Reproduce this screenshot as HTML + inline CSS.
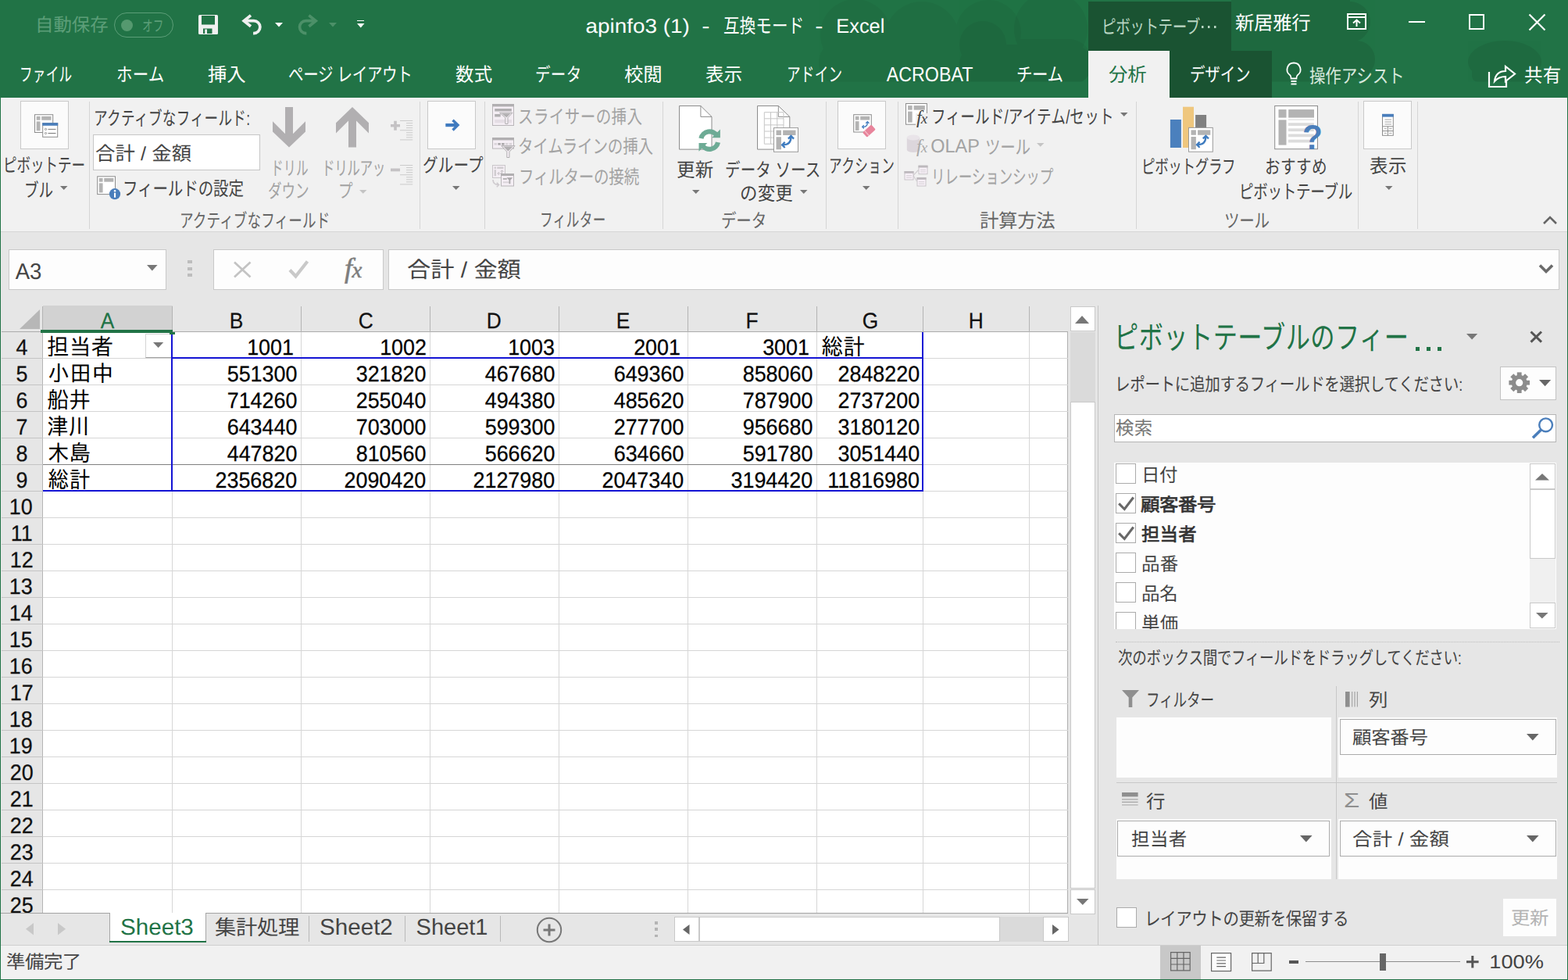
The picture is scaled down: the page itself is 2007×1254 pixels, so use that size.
<!DOCTYPE html>
<html lang="ja">
<head>
<meta charset="utf-8">
<title>apinfo3 (1) - Excel</title>
<style>
html,body{margin:0;padding:0}
body{width:2007px;height:1254px;overflow:hidden;background:#e6e6e6;font-family:"Liberation Sans",sans-serif;color:#000;text-rendering:geometricPrecision}
#app{position:relative;width:2007px;height:1254px;overflow:hidden;background:#e6e6e6}
#app div,#app header,#app nav,#app section,#app aside,#app footer,#app main{position:absolute;box-sizing:border-box}
.x{position:absolute;white-space:pre}
.j,.i{position:absolute;overflow:visible;display:block}
.j text{font-family:"Liberation Sans","Noto Sans CJK JP",sans-serif;font-size:1000px}
.j text.g{font-family:"Liberation Sans","IPAGothic","Noto Sans CJK JP",sans-serif}
.titlebar,.tabs{background:#217346}
.tabs{background:none}
.ribbon{background:#f1f1f1}
.statusbar{background:#f1f1f1}
.cell{position:absolute;white-space:pre}
.fx{font-family:"Liberation Serif",serif;font-style:italic;line-height:1}
</style>
</head>
<body>
<div id="app">
<header class="titlebar" style="left:0px;top:0px;width:2007px;height:125px;">
<svg class="i" style="left:0;top:0" width="2007" height="125" viewBox="0 0 2007 125" aria-hidden="true"><defs><clipPath id="cc"><rect width="2007" height="104.600"/></clipPath></defs><g clip-path="url(#cc)" fill="#000"><g opacity=".045"><circle cx="1095" cy="44" r="45"/><circle cx="1180" cy="50" r="48"/><circle cx="1265" cy="42" r="42"/><rect x="1048" y="50" width="350" height="60" rx="30"/></g><g opacity=".05"><circle cx="1345" cy="37" r="47"/><circle cx="1258" cy="57" r="30"/><rect x="1228" y="57" width="170" height="50" rx="25"/></g><g opacity=".085"><rect x="1576" y="0" width="152" height="105"/><circle cx="1728" cy="28" r="26"/><circle cx="1736" cy="76" r="24"/></g><g opacity=".075"><ellipse cx="1926" cy="79" rx="47" ry="27"/><rect x="1884" y="80" width="86" height="25" rx="8"/></g></g></svg>
<div style="left:1393px;top:2px;width:183px;height:63px;background:#1a5332;"></div>
<div style="left:1497px;top:65px;width:131px;height:60px;background:#1a5332;"></div>
<div style="left:1393px;top:65px;width:104px;height:60px;background:#f1f1f1;"></div>
<svg class="j" style="left:44.97px;top:19.38px" width="93.56" height="25.85" viewBox="133 -900 3854 1100" preserveAspectRatio="none" fill="#5c9e78"><text x="133" y="0" textLength="3854" lengthAdjust="spacingAndGlyphs">自動保存</text></svg>
<div style="left:146px;top:16px;width:76px;height:32px;border:1.200px solid #5c9e78;border-radius:16px;box-sizing:border-box;"></div>
<div style="left:154.5px;top:24.5px;width:15px;height:15px;background:#55996f;border-radius:50%;"></div>
<svg class="j" style="left:182.25px;top:22.26px" width="27.31" height="21.45" viewBox="39 -900 1480 1100" preserveAspectRatio="none" fill="#5c9e78"><text x="39" y="0" textLength="1480" lengthAdjust="spacingAndGlyphs">オフ</text></svg>
<svg class="i" style="left:254px;top:19px;" width="25" height="25" viewBox="0 0 25 25"><rect width="25" height="25" rx="1.5" fill="#f0f0f0"/><rect x="4" y="1" width="17" height="11.5" fill="#217346"/><rect x="6" y="17.5" width="11.5" height="6.5" fill="#217346"/><rect x="8.200" y="18.500" width="2.800" height="5.500" fill="#f0f0f0"/></svg>
<svg class="i" style="left:309.6px;top:17.3px;" width="26.4" height="28.2" viewBox="0 0 30 32"><path d="M12.500 3L2.500 11L12.500 19" fill="none" stroke="#f0f0f0" stroke-width="4.200"/><path d="M4 11H17a9 9 0 0 1 0 18h-1" fill="none" stroke="#f0f0f0" stroke-width="4.200"/></svg>
<svg class="i" style="left:351.5px;top:28.75px;" width="10" height="5.5" viewBox="0 0 10 5.5"><path d="M0 0H10 L5 5.5 z" fill="#fff"/></svg>
<svg class="i" style="left:379.5px;top:17.3px;" width="26.4" height="28.2" viewBox="0 0 30 32"><g transform="translate(30 0) scale(-1 1)"><path d="M12.500 3L2.500 11L12.500 19" fill="none" stroke="#4c9068" stroke-width="4.200"/><path d="M4 11H17a9 9 0 0 1 0 18h-1" fill="none" stroke="#4c9068" stroke-width="4.200"/></g></svg>
<svg class="i" style="left:420.5px;top:28.75px;" width="10" height="5.5" viewBox="0 0 10 5.5"><path d="M0 0H10 L5 5.5 z" fill="#4c9068"/></svg>
<div style="left:456.5px;top:25.5px;width:9.5px;height:1.5px;background:#fff;"></div>
<svg class="i" style="left:456.55px;top:29.85px;" width="9.5" height="5.5" viewBox="0 0 9.5 5.5"><path d="M0 0H9.5 L4.75 5.5 z" fill="#fff"/></svg>
<span class="x" style="top:18px;height:33px;line-height:33px;font-size:25.6px;left:734.58px;width:162.39px;text-align:center;color:#fff;transform:scaleX(1.09);transform-origin:center center;">apinfo3 (1)</span>
<span class="x" style="top:18px;height:33px;line-height:33px;font-size:25.6px;left:878.99px;width:48.52px;text-align:center;color:#fff;transform:scaleX(1.2);transform-origin:center center;">-</span>
<svg class="j" style="left:926.28px;top:19px" width="103.44" height="27.5" viewBox="22 -900 4305 1100" preserveAspectRatio="none" fill="#fff"><text x="22" y="0" textLength="4305" lengthAdjust="spacingAndGlyphs">互換モード</text></svg>
<span class="x" style="top:18px;height:33px;line-height:33px;font-size:25.6px;left:1024.49px;width:48.52px;text-align:center;color:#fff;transform:scaleX(1.2);transform-origin:center center;">-</span>
<span class="x" style="top:18px;height:33px;line-height:33px;font-size:25.6px;left:1049.51px;width:102.6px;text-align:center;color:#fff;transform:scaleX(0.99);transform-origin:center center;">Excel</span>
<svg class="j" style="left:1409.91px;top:20.72px" width="125.88" height="26.4" viewBox="119 -900 5484 1100" preserveAspectRatio="none" fill="#b9d6c3"><text x="119" y="0" textLength="5484" lengthAdjust="spacingAndGlyphs">ピボットテーブ</text></svg>
<svg class="i" style="left:1538px;top:32.9px;" width="2.5" height="3" viewBox="0 0 2.500 3"><rect width="2.500" height="3" fill="#b9d6c3"/></svg>
<svg class="i" style="left:1546.2px;top:32.9px;" width="2.5" height="3" viewBox="0 0 2.500 3"><rect width="2.500" height="3" fill="#b9d6c3"/></svg>
<svg class="i" style="left:1554.4px;top:32.9px;" width="2.5" height="3" viewBox="0 0 2.500 3"><rect width="2.500" height="3" fill="#b9d6c3"/></svg>
<svg class="j" style="left:1581.27px;top:15.52px" width="96.45" height="26.4" viewBox="-2 -900 3987 1100" preserveAspectRatio="none" fill="#fff"><text x="-2" y="0" textLength="3987" lengthAdjust="spacingAndGlyphs">新居雅行</text></svg>
<svg class="i" style="left:1724px;top:17px;" width="26" height="22" viewBox="0 0 26 22"><rect x="1" y="1" width="23" height="19" fill="none" stroke="#fff" stroke-width="2"/><path d="M1 5H24" stroke="#fff" stroke-width="2"/><path d="M12.5 17V9M8 12.5L12.5 8.5L17 12.5" fill="none" stroke="#fff" stroke-width="2"/></svg>
<div style="left:1803px;top:27px;width:21px;height:2px;background:#fff;"></div>
<div style="left:1880px;top:18px;width:20px;height:20px;border:2px solid #fff;box-sizing:border-box;"></div>
<svg class="i" style="left:1956px;top:17px;" width="23" height="23" viewBox="0 0 23 23"><path d="M1.5 1.5L21.5 21.5M21.5 1.5L1.5 21.5" stroke="#fff" stroke-width="2.2"/></svg>
</header>
<nav class="tabs" style="left:0px;top:65px;width:2007px;height:60px;">
<svg class="j" style="left:25.35px;top:17.26px" width="67.3" height="26.95" viewBox="86 -900 3106 1100" preserveAspectRatio="none" fill="#fff"><text x="86" y="0" textLength="3106" lengthAdjust="spacingAndGlyphs">ファイル</text></svg>
<svg class="j" style="left:149.21px;top:17.26px" width="61.58" height="26.95" viewBox="35 -900 2342 1100" preserveAspectRatio="none" fill="#fff"><text x="35" y="0" textLength="2342" lengthAdjust="spacingAndGlyphs">ホーム</text></svg>
<svg class="j" style="left:266.27px;top:17.26px" width="48.45" height="26.95" viewBox="-3 -900 2000 1100" preserveAspectRatio="none" fill="#fff"><text x="-3" y="0" textLength="2000" lengthAdjust="spacingAndGlyphs">挿入</text></svg>
<svg class="j" style="left:369.27px;top:17.26px" width="158.45" height="26.95" viewBox="12 -900 6546 1100" preserveAspectRatio="none" fill="#fff"><text x="12" y="0" textLength="6546" lengthAdjust="spacingAndGlyphs">ページ レイアウト</text></svg>
<svg class="j" style="left:583.29px;top:17.26px" width="47.43" height="26.95" viewBox="4 -900 1993 1100" preserveAspectRatio="none" fill="#fff"><text x="4" y="0" textLength="1993" lengthAdjust="spacingAndGlyphs">数式</text></svg>
<svg class="j" style="left:685.22px;top:17.26px" width="59.56" height="26.95" viewBox="38 -900 2290 1100" preserveAspectRatio="none" fill="#fff"><text x="38" y="0" textLength="2290" lengthAdjust="spacingAndGlyphs">データ</text></svg>
<svg class="j" style="left:799.25px;top:17.26px" width="48.5" height="26.95" viewBox="2 -900 1944 1100" preserveAspectRatio="none" fill="#fff"><text x="2" y="0" textLength="1944" lengthAdjust="spacingAndGlyphs">校閲</text></svg>
<svg class="j" style="left:903.28px;top:17.26px" width="47.44" height="26.95" viewBox="-2 -900 1973 1100" preserveAspectRatio="none" fill="#fff"><text x="-2" y="0" textLength="1973" lengthAdjust="spacingAndGlyphs">表示</text></svg>
<svg class="j" style="left:1007.31px;top:17.26px" width="71.38" height="26.95" viewBox="69 -900 3099 1100" preserveAspectRatio="none" fill="#fff"><text x="69" y="0" textLength="3099" lengthAdjust="spacingAndGlyphs">アドイン</text></svg>
<span class="x" style="top:13px;height:34px;line-height:34px;font-size:26.1px;left:1107.16px;width:166.17px;text-align:center;color:#fff;transform:scaleX(0.89);transform-origin:center center;">ACROBAT</span>
<svg class="j" style="left:1301.24px;top:17.26px" width="59.53" height="26.95" viewBox="40 -900 2337 1100" preserveAspectRatio="none" fill="#fff"><text x="40" y="0" textLength="2337" lengthAdjust="spacingAndGlyphs">チーム</text></svg>
<svg class="j" style="left:1419.27px;top:17.26px" width="48.45" height="26.95" viewBox="-7 -900 1999 1100" preserveAspectRatio="none" fill="#217346"><text x="-7" y="0" textLength="1999" lengthAdjust="spacingAndGlyphs">分析</text></svg>
<svg class="j" style="left:1523.26px;top:17.26px" width="77.49" height="26.95" viewBox="38 -900 3130 1100" preserveAspectRatio="none" fill="#fff"><text x="38" y="0" textLength="3130" lengthAdjust="spacingAndGlyphs">デザイン</text></svg>
<svg class="i" style="left:1645px;top:14px;" width="22" height="34" viewBox="0 0 22 34"><path d="M11 1.5a8.5 8.5 0 0 0-5 15.4c1.2 1 1.6 2.4 1.6 4.6h6.8c0-2.2.4-3.6 1.6-4.6A8.5 8.5 0 0 0 11 1.500z" fill="none" stroke="#fff" stroke-width="1.8"/><path d="M7.500 25h7M7.500 28.500h7" stroke="#fff" stroke-width="1.8"/></svg>
<svg class="j" style="left:1676.29px;top:19.26px" width="121.43" height="26.95" viewBox="7 -900 5101 1100" preserveAspectRatio="none" fill="#d6e8dc"><text x="7" y="0" textLength="5101" lengthAdjust="spacingAndGlyphs">操作アシスト</text></svg>
<svg class="i" style="left:1904px;top:14px;" width="38" height="34" viewBox="0 0 38 34"><path d="M2 13V32H24V25" fill="none" stroke="#fff" stroke-width="2.2"/><path d="M9 25c1-9 6-13 14-13V6l12 9.500-12 9.500v-6c-6 0-10 1.500-14 6z" fill="none" stroke="#fff" stroke-width="2.2" stroke-linejoin="miter"/></svg>
<svg class="j" style="left:1951.27px;top:18.26px" width="47.46" height="26.95" viewBox="18 -900 1951 1100" preserveAspectRatio="none" fill="#fff"><text x="18" y="0" textLength="1951" lengthAdjust="spacingAndGlyphs">共有</text></svg>
</nav>
<section class="ribbon" style="left:0px;top:125px;width:2007px;height:172px;">
<div style="left:0px;top:171px;width:2007px;height:1.3px;background:#d6d6d6;"></div>
<div style="left:114px;top:5px;width:1px;height:163px;background:#d5d5d5;"></div>
<div style="left:537px;top:5px;width:1px;height:163px;background:#d5d5d5;"></div>
<div style="left:620px;top:5px;width:1px;height:163px;background:#d5d5d5;"></div>
<div style="left:848px;top:5px;width:1px;height:163px;background:#d5d5d5;"></div>
<div style="left:1057px;top:5px;width:1px;height:163px;background:#d5d5d5;"></div>
<div style="left:1149px;top:5px;width:1px;height:163px;background:#d5d5d5;"></div>
<div style="left:1454px;top:5px;width:1px;height:163px;background:#d5d5d5;"></div>
<div style="left:1738px;top:5px;width:1px;height:163px;background:#d5d5d5;"></div>
<div style="left:1814px;top:5px;width:1px;height:163px;background:#d5d5d5;"></div>
<div style="left:26px;top:4px;width:62px;height:62px;background:#fbfbfb;border:1px solid #c9c9c9;"></div>
<svg class="i" style="left:40px;top:17px;" width="40" height="38" viewBox="0 0 40 38"><rect x="4.5" y="4.7" width="23.2" height="22.8" fill="#fff" stroke="#8c8c8c"/><rect x="6.66" y="6.86" width="4.84" height="4.84" fill="#b3b3b3"/><rect x="13.2" y="6.86" width="12.34" height="4.84" fill="#b3b3b3"/><rect x="6.66" y="13.37" width="4.84" height="11.97" fill="#b3b3b3"/><rect x="14.700" y="15.700" width="19" height="17.600" fill="#fff" stroke="#8c8c8c"/><rect x="14.200" y="15.200" width="20" height="3.600" fill="#4a7ebb"/><circle cx="18.500" cy="23.400" r="1.100" fill="none" stroke="#777" stroke-width=".8"/><circle cx="18.500" cy="28.500" r="1.100" fill="none" stroke="#777" stroke-width=".8"/><path d="M21.500 23.400h10M21.500 28.500h10" stroke="#777" stroke-width="1"/></svg>
<svg class="j" style="left:4.02px;top:73.02px" width="105.06" height="26.4" viewBox="119 -900 4629 1100" preserveAspectRatio="none" fill="#444"><text x="119" y="0" textLength="4629" lengthAdjust="spacingAndGlyphs">ピボットテー</text></svg>
<svg class="j" style="left:30.57px;top:104.52px" width="37.17" height="26.4" viewBox="74 -900 1518 1100" preserveAspectRatio="none" fill="#444"><text x="74" y="0" textLength="1518" lengthAdjust="spacingAndGlyphs">ブル</text></svg>
<svg class="i" style="left:76.95px;top:112.9px;" width="9.5" height="5" viewBox="0 0 9.5 5"><path d="M0 0H9.5 L4.75 5 z" fill="#777"/></svg>
<svg class="j" style="left:119.63px;top:12.52px" width="200.33" height="26.4" viewBox="69 -900 9026 1100" preserveAspectRatio="none" fill="#444"><text x="69" y="0" textLength="9026" lengthAdjust="spacingAndGlyphs">アクティブなフィールド:</text></svg>
<div style="left:119px;top:47.3px;width:214px;height:45.5px;background:#fff;border:1px solid #c6c6c6;"></div>
<svg class="j" style="left:122.24px;top:58.12px" width="123.31" height="26.4" viewBox="4 -900 4894 1100" preserveAspectRatio="none" fill="#444"><text x="4" y="0" textLength="4894" lengthAdjust="spacingAndGlyphs">合計 / 金額</text></svg>
<svg class="i" style="left:122px;top:98px;" width="34" height="34" viewBox="0 0 34 34"><rect x="2.7" y="2.8" width="22.8" height="22.8" fill="#fff" stroke="#8c8c8c"/><rect x="4.82" y="4.92" width="4.76" height="4.76" fill="#b3b3b3"/><rect x="11.24" y="4.92" width="12.14" height="4.76" fill="#b3b3b3"/><rect x="4.82" y="11.34" width="4.76" height="12.14" fill="#b3b3b3"/><circle cx="25" cy="25.200" r="7.100" fill="#4a7ebb"/><rect x="24" y="23.700" width="2.100" height="6" fill="#fff"/><circle cx="25.050" cy="21.300" r="1.250" fill="#fff"/></svg>
<svg class="j" style="left:156.81px;top:102.52px" width="154.87" height="26.4" viewBox="86 -900 6762 1100" preserveAspectRatio="none" fill="#444"><text x="86" y="0" textLength="6762" lengthAdjust="spacingAndGlyphs">フィールドの設定</text></svg>
<svg class="j" style="left:229.74px;top:143.52px" width="192.42" height="26.4" viewBox="69 -900 8718 1100" preserveAspectRatio="none" fill="#666"><text x="69" y="0" textLength="8718" lengthAdjust="spacingAndGlyphs">アクティブなフィールド</text></svg>
<svg class="i" style="left:345px;top:10px;" width="50" height="56" viewBox="0 0 50 56"><path d="M20 2H30V36.300L46 20.300V33.400L25 53.600L4 33.400V20.300L20 36.300z" fill="#b1afb1"/></svg>
<svg class="j" style="left:346.64px;top:76.52px" width="48.02" height="26.4" viewBox="208 -900 2184 1100" preserveAspectRatio="none" fill="#a3a3a3"><text x="208" y="0" textLength="2184" lengthAdjust="spacingAndGlyphs">ドリル</text></svg>
<svg class="j" style="left:343.33px;top:105.52px" width="52.34" height="26.4" viewBox="18 -900 2350 1100" preserveAspectRatio="none" fill="#a3a3a3"><text x="18" y="0" textLength="2350" lengthAdjust="spacingAndGlyphs">ダウン</text></svg>
<svg class="i" style="left:426px;top:10px;" width="50" height="56" viewBox="0 0 50 56"><path d="M25 2L46 22.200V35.500L30 19.500V53.600H20V19.500L4 35.500V22.200z" fill="#b1afb1"/></svg>
<svg class="j" style="left:411.64px;top:76.52px" width="80.81" height="26.4" viewBox="208 -900 3698 1100" preserveAspectRatio="none" fill="#a3a3a3"><text x="208" y="0" textLength="3698" lengthAdjust="spacingAndGlyphs">ドリルアッ</text></svg>
<svg class="j" style="left:433.24px;top:105.52px" width="18.82" height="26.4" viewBox="74 -900 743 1100" preserveAspectRatio="none" fill="#a3a3a3"><text x="74" y="0" textLength="743" lengthAdjust="spacingAndGlyphs">プ</text></svg>
<svg class="i" style="left:459.95px;top:118.1px;" width="9.5" height="4.8" viewBox="0 0 9.5 4.8"><path d="M0 0H9.5 L4.75 4.8 z" fill="#c4c4c4"/></svg>
<svg class="i" style="left:500px;top:27.5px;" width="29" height="27" viewBox="0 0 29 27"><rect x="12" y="1" width="16.2" height="1" fill="#cbcbcb"/><rect x="20" y="4.05" width="8.2" height="1" fill="#cbcbcb"/><rect x="20" y="7.1" width="8.2" height="1" fill="#cbcbcb"/><rect x="20" y="10.15" width="8.2" height="1" fill="#cbcbcb"/><rect x="12" y="13.2" width="16.2" height="1" fill="#cbcbcb"/><rect x="20" y="16.25" width="8.2" height="1" fill="#cbcbcb"/><rect x="20" y="19.3" width="8.2" height="1" fill="#cbcbcb"/><rect x="20" y="22.35" width="8.2" height="1" fill="#cbcbcb"/><rect x="12" y="25.4" width="16.2" height="1" fill="#cbcbcb"/><path d="M0 7.700h12M6 1.700v12" stroke="#c4c2c4" stroke-width="3.600"/></svg>
<svg class="i" style="left:500px;top:84.5px;" width="29" height="27" viewBox="0 0 29 27"><rect x="12" y="1" width="16.2" height="1" fill="#cbcbcb"/><rect x="20" y="4.05" width="8.2" height="1" fill="#cbcbcb"/><rect x="20" y="7.1" width="8.2" height="1" fill="#cbcbcb"/><rect x="20" y="10.15" width="8.2" height="1" fill="#cbcbcb"/><rect x="12" y="13.2" width="16.2" height="1" fill="#cbcbcb"/><rect x="20" y="16.25" width="8.2" height="1" fill="#cbcbcb"/><rect x="20" y="19.3" width="8.2" height="1" fill="#cbcbcb"/><rect x="20" y="22.35" width="8.2" height="1" fill="#cbcbcb"/><rect x="12" y="25.4" width="16.2" height="1" fill="#cbcbcb"/><path d="M0 7.400h12" stroke="#c4c2c4" stroke-width="3.800"/></svg>
<div style="left:547px;top:4px;width:62px;height:62px;background:#fbfbfb;border:1px solid #c9c9c9;"></div>
<svg class="i" style="left:568px;top:25px;" width="24" height="20" viewBox="0 0 24 20"><path d="M2.300 10.100H17" stroke="#3f7abf" stroke-width="4.200"/><path d="M11.500 3.700L18 10.100L11.500 16.500" fill="none" stroke="#3f7abf" stroke-width="3.400"/></svg>
<svg class="j" style="left:540.87px;top:72.52px" width="77.86" height="26.4" viewBox="16 -900 3201 1100" preserveAspectRatio="none" fill="#444"><text x="16" y="0" textLength="3201" lengthAdjust="spacingAndGlyphs">グループ</text></svg>
<svg class="i" style="left:578.85px;top:112.9px;" width="9.5" height="5" viewBox="0 0 9.5 5"><path d="M0 0H9.5 L4.75 5 z" fill="#777"/></svg>
<svg class="i" style="left:629px;top:7px;" width="31" height="30" viewBox="0 0 31 30"><rect x="1.500" y="1.500" width="27" height="27" fill="#f4eef4" stroke="#b9b6b9"/><rect x="1" y="1" width="28" height="3.400" fill="#b1afb1"/><rect x="4.200" y="7" width="21.600" height="3.500" fill="#b1afb1"/><rect x="4.200" y="14" width="7.500" height="3.500" fill="#b1afb1"/><rect x="4.200" y="21" width="21.600" height="4.200" fill="#e4dde4"/><path d="M10.500 12.300H27L21 18.600V26.500H17.800V18.600z" fill="#f4eef4" stroke="#b1afb1" stroke-width="1"/><path d="M12.800 13.300H24.700L19.400 18.200z" fill="#b1afb1"/></svg>
<svg class="j" style="left:662.8px;top:10.52px" width="159.51" height="26.4" viewBox="50 -900 6807 1100" preserveAspectRatio="none" fill="#a3a3a3"><text x="50" y="0" textLength="6807" lengthAdjust="spacingAndGlyphs">スライサーの挿入</text></svg>
<svg class="i" style="left:629px;top:50px;" width="31" height="28" viewBox="0 0 31 28"><rect x="1.500" y="1.500" width="27" height="13.600" fill="#f4eef4" stroke="#b9b6b9"/><rect x="1" y="1" width="28" height="3.400" fill="#b1afb1"/><rect x="3.500" y="8" width="3.500" height="2.600" fill="#d9d4d9"/><rect x="8.300" y="8" width="3.500" height="2.600" fill="#a9a7a9"/><rect x="13.100" y="8" width="3.500" height="2.600" fill="#a9a7a9"/><rect x="17.900" y="8" width="3.500" height="2.600" fill="#d9d4d9"/><rect x="22.700" y="8" width="3.500" height="2.600" fill="#d9d4d9"/><path d="M12.800 11.600H30L23 19.200V26.500H19.800V19.200z" fill="#f4eef4" stroke="#b1afb1" stroke-width="1"/><path d="M15.200 12.600H27.600L21.400 18.600z" fill="#b1afb1"/></svg>
<svg class="j" style="left:663.32px;top:48.92px" width="172.96" height="26.4" viewBox="44 -900 7613 1100" preserveAspectRatio="none" fill="#a3a3a3"><text x="44" y="0" textLength="7613" lengthAdjust="spacingAndGlyphs">タイムラインの挿入</text></svg>
<svg class="i" style="left:629px;top:85px;" width="31" height="30" viewBox="0 0 31 30"><rect x="1.500" y="1.500" width="16" height="16" fill="#f4eef4" stroke="#c9c6c9"/><rect x="3.600" y="3.500" width="2.400" height="2.400" fill="#d0ccd0"/><rect x="7.200" y="3.500" width="8.200" height="2.400" fill="#d0ccd0"/><rect x="3.600" y="7.200" width="2.400" height="8" fill="#d0ccd0"/><path d="M8 12h5.500V8M11.500 9.800l2-2l2 2M9.800 10l-2 2l2 2" fill="none" stroke="#c3bfc3" stroke-width="1"/><rect x="12.500" y="12.500" width="16" height="15.500" fill="#f4eef4" stroke="#b9b6b9"/><rect x="12" y="12" width="17" height="3" fill="#b1afb1"/><rect x="14.800" y="18" width="5" height="1.800" fill="#b1afb1"/><rect x="14.800" y="22.400" width="9" height="1.800" fill="#d9d4d9"/><path d="M19.500 17.200H27.200L24.300 20.600V25.200H22.500V20.600z" fill="#a9a7a9"/><path d="M2 20c0 5 3 6.500 7 6.500M6.800 23.700l2.800 2.800l-2.800 2.800" fill="none" stroke="#cfcbcf" stroke-width="1.600"/></svg>
<svg class="j" style="left:663.72px;top:88.02px" width="153.96" height="26.4" viewBox="86 -900 6776 1100" preserveAspectRatio="none" fill="#a3a3a3"><text x="86" y="0" textLength="6776" lengthAdjust="spacingAndGlyphs">フィルターの接続</text></svg>
<svg class="j" style="left:691.34px;top:143.22px" width="84.92" height="26.4" viewBox="86 -900 3862 1100" preserveAspectRatio="none" fill="#666"><text x="86" y="0" textLength="3862" lengthAdjust="spacingAndGlyphs">フィルター</text></svg>
<svg class="i" style="left:869px;top:10px;" width="56" height="60" viewBox="0 0 56 60"><path d="M.500 .500H27.900 L42 14.400V56.100H.500z" fill="#fff" stroke="#8c8c8c"/><path d="M27.900 .500V14.400H42" fill="none" stroke="#8c8c8c"/><g transform="translate(39.200 44.600)" fill="none" stroke="#6dab95" stroke-width="6.200"><path d="M-10.800 -2.500A11.100 11.100 0 0 1 9.500 -6"/><path d="M10.800 2.500A11.100 11.100 0 0 1 -9.500 6"/></g><path d="M52.900 30.400v10.800h-10.800z" fill="#6dab95"/><path d="M25.500 58.800v-10.800h10.800z" fill="#6dab95"/></svg>
<svg class="j" style="left:866.27px;top:78.52px" width="47.75" height="26.4" viewBox="17 -900 1973 1100" preserveAspectRatio="none" fill="#444"><text x="17" y="0" textLength="1973" lengthAdjust="spacingAndGlyphs">更新</text></svg>
<svg class="i" style="left:885.75px;top:118px;" width="9.5" height="5" viewBox="0 0 9.5 5"><path d="M0 0H9.5 L4.75 5 z" fill="#777"/></svg>
<svg class="i" style="left:969px;top:10px;" width="56" height="62" viewBox="0 0 56 62"><path d="M.500 .500H27.300 L41.800 14.400V56.100H.500z" fill="#fff" stroke="#8c8c8c"/><path d="M27.300 .500V14.400H41.800" fill="none" stroke="#8c8c8c"/><path d="M9.300 8.7H34" stroke="#c6c6c6"/><path d="M9.300 16.8H34" stroke="#c6c6c6"/><path d="M9.300 24.9H34" stroke="#c6c6c6"/><path d="M9.300 33H34" stroke="#c6c6c6"/><path d="M9.300 41.1H34" stroke="#c6c6c6"/><path d="M9.300 49.2H34" stroke="#c6c6c6"/><path d="M9.3 8.700V49.200" stroke="#c6c6c6"/><path d="M17.53 8.700V49.200" stroke="#c6c6c6"/><path d="M25.76 8.700V49.200" stroke="#c6c6c6"/><path d="M33.99 8.700V49.200" stroke="#c6c6c6"/><rect x="21.5" y="28.6" width="31" height="30.7" fill="#fff" stroke="#9a9a9a"/><rect x="24.52" y="31.62" width="6.4" height="6.4" fill="#b3b3b3"/><rect x="33.16" y="31.62" width="16.32" height="6.4" fill="#b3b3b3"/><rect x="24.52" y="40.24" width="6.4" height="16.04" fill="#b3b3b3"/><path d="M33.1 50.38Q43.48 50.38 43.48 40" fill="none" stroke="#3e7bbf" stroke-width="2.3"/><path d="M39.9 42.58l3.58 -3.58l3.58 3.58" fill="none" stroke="#3e7bbf" stroke-width="2.3"/><path d="M35.68 46.8l-3.58 3.58l3.58 3.58" fill="none" stroke="#3e7bbf" stroke-width="2.3"/></svg>
<svg class="j" style="left:928.26px;top:78.52px" width="122.48" height="26.4" viewBox="38 -900 4961 1100" preserveAspectRatio="none" fill="#444"><text x="38" y="0" textLength="4961" lengthAdjust="spacingAndGlyphs">データ ソース</text></svg>
<svg class="j" style="left:946.98px;top:109.02px" width="67.95" height="26.4" viewBox="46 -900 2813 1100" preserveAspectRatio="none" fill="#444"><text x="46" y="0" textLength="2813" lengthAdjust="spacingAndGlyphs">の変更</text></svg>
<svg class="i" style="left:1023.65px;top:118px;" width="9.5" height="5" viewBox="0 0 9.5 5"><path d="M0 0H9.5 L4.75 5 z" fill="#777"/></svg>
<svg class="j" style="left:923.24px;top:143.52px" width="58.12" height="26.4" viewBox="38 -900 2290 1100" preserveAspectRatio="none" fill="#666"><text x="38" y="0" textLength="2290" lengthAdjust="spacingAndGlyphs">データ</text></svg>
<div style="left:1072px;top:4px;width:62px;height:62px;background:#fbfbfb;border:1px solid #c9c9c9;"></div>
<svg class="i" style="left:1090px;top:19px;" width="34" height="32" viewBox="0 0 34 32"><rect x="2.7" y="2.7" width="22.6" height="22.3" fill="#fff" stroke="#8c8c8c"/><rect x="4.8" y="4.8" width="4.72" height="4.72" fill="#b3b3b3"/><rect x="11.17" y="4.8" width="12.04" height="4.72" fill="#b3b3b3"/><rect x="4.8" y="11.15" width="4.72" height="11.76" fill="#b3b3b3"/><path d="M14.7 18.35Q20.35 18.35 20.35 12.7" fill="none" stroke="#3e7bbf" stroke-width="1.3"/><path d="M18.26 13.79l2.09 -2.09l2.09 2.09" fill="none" stroke="#3e7bbf" stroke-width="1.3"/><path d="M15.79 16.26l-2.09 2.09l2.09 2.09" fill="none" stroke="#3e7bbf" stroke-width="1.3"/><g transform="translate(22.400 23.600) rotate(-42)"><rect x="-7.500" y="-4.200" width="15" height="8.400" rx="1.200" fill="#e8849b"/><rect x="-4.600" y="-4.200" width="1.100" height="8.400" fill="#f6c4cf"/></g></svg>
<svg class="j" style="left:1061.35px;top:73.52px" width="84.3" height="26.4" viewBox="69 -900 3899 1100" preserveAspectRatio="none" fill="#444"><text x="69" y="0" textLength="3899" lengthAdjust="spacingAndGlyphs">アクション</text></svg>
<svg class="i" style="left:1103.75px;top:112.9px;" width="9.5" height="5" viewBox="0 0 9.5 5"><path d="M0 0H9.5 L4.75 5 z" fill="#777"/></svg>
<svg class="i" style="left:1158px;top:6px;" width="34" height="34" viewBox="0 0 34 34"><rect x="1.5" y="1.5" width="26.9" height="26.7" fill="#fff" stroke="#8c8c8c"/><rect x="4.07" y="4.07" width="5.58" height="5.58" fill="#b3b3b3"/><rect x="11.6" y="4.07" width="14.23" height="5.58" fill="#b3b3b3"/><rect x="4.07" y="11.59" width="5.58" height="14.04" fill="#b3b3b3"/><rect x="14" y="14" width="16" height="16" fill="#f1f1f1"/></svg>
<span class="x fx" style="left:1173px;top:14px;font-size:24px;color:#444">f<span style="font-size:19px;margin-left:-1px">x</span></span>
<svg class="j" style="left:1191.91px;top:10.52px" width="233.77" height="26.4" viewBox="86 -900 10206 1100" preserveAspectRatio="none" fill="#444"><text x="86" y="0" textLength="10206" lengthAdjust="spacingAndGlyphs">フィールド/アイテム/セット</text></svg>
<svg class="i" style="left:1433.65px;top:19px;" width="9.5" height="5" viewBox="0 0 9.5 5"><path d="M0 0H9.5 L4.75 5 z" fill="#777"/></svg>
<svg class="i" style="left:1158px;top:45px;" width="34" height="30" viewBox="0 0 34 30"><path d="M2.800 6V21.500a8.200 3.600 0 0 0 16.400 0V6" fill="#dcd6dc"/><ellipse cx="11" cy="6" rx="8.200" ry="3.600" fill="#e9e4e9"/></svg>
<span class="x fx" style="left:1173px;top:51px;font-size:24px;color:#a9a9a9">f<span style="font-size:19px;margin-left:-1px">x</span></span>
<span class="x" style="top:47px;height:32px;line-height:32px;font-size:24.4px;left:1170.31px;width:105.1px;text-align:center;color:#a3a3a3;transform:scaleX(0.96);transform-origin:center center;">OLAP</span>
<svg class="j" style="left:1261.06px;top:49.52px" width="57.88" height="26.4" viewBox="48 -900 2344 1100" preserveAspectRatio="none" fill="#a3a3a3"><text x="48" y="0" textLength="2344" lengthAdjust="spacingAndGlyphs">ツール</text></svg>
<svg class="i" style="left:1327.45px;top:58px;" width="9.5" height="4.8" viewBox="0 0 9.5 4.8"><path d="M0 0H9.5 L4.75 4.8 z" fill="#c4c4c4"/></svg>
<svg class="i" style="left:1157px;top:86px;" width="33" height="30" viewBox="0 0 33 30"><path d="M12 13.500L18.500 6.500M12 13.500L16.500 21" stroke="#d3cfd3" stroke-width="1.200" fill="none"/><rect x="1" y="8.5" width="11" height="10.500" fill="#f7f0f7" stroke="#c9c5c9"/><rect x="0.5" y="8" width="12" height="2.800" fill="#bdb9bd"/><path d="M3 13.7h7M3 16.2h7" stroke="#d5cfd5" stroke-width="1"/><rect x="19" y="1.2" width="11" height="10.500" fill="#f7f0f7" stroke="#c9c5c9"/><rect x="18.5" y="0.7" width="12" height="2.800" fill="#bdb9bd"/><path d="M21 6.4h7M21 8.9h7" stroke="#d5cfd5" stroke-width="1"/><rect x="17" y="16.5" width="11" height="10.500" fill="#f7f0f7" stroke="#c9c5c9"/><rect x="16.5" y="16" width="12" height="2.800" fill="#bdb9bd"/><path d="M19 21.7h7M19 24.2h7" stroke="#d5cfd5" stroke-width="1"/></svg>
<svg class="j" style="left:1191.94px;top:88.02px" width="156.02" height="26.4" viewBox="146 -900 7071 1100" preserveAspectRatio="none" fill="#a3a3a3"><text x="146" y="0" textLength="7071" lengthAdjust="spacingAndGlyphs">リレーションシップ</text></svg>
<svg class="j" style="left:1253.87px;top:143.52px" width="96.45" height="26.4" viewBox="8 -900 3989 1100" preserveAspectRatio="none" fill="#666"><text x="8" y="0" textLength="3989" lengthAdjust="spacingAndGlyphs">計算方法</text></svg>
<svg class="i" style="left:1497px;top:10px;" width="58" height="62" viewBox="0 0 58 62"><rect x=".9" y="18" width="14" height="36" fill="#4b80bd"/><rect x="17" y="1.700" width="14" height="52.300" fill="#efc77e"/><rect x="33.100" y="12" width="14" height="20" fill="#808080"/><rect x="24.5" y="28.4" width="30.8" height="30.8" fill="#fff" stroke="#9a9a9a"/><rect x="27.5" y="31.4" width="6.36" height="6.36" fill="#b3b3b3"/><rect x="36.08" y="31.4" width="16.22" height="6.36" fill="#b3b3b3"/><rect x="27.5" y="39.98" width="6.36" height="16.22" fill="#b3b3b3"/><path d="M36 50.17Q46.38 50.17 46.38 39.8" fill="none" stroke="#3e7bbf" stroke-width="2.3"/><path d="M42.8 42.38l3.58 -3.58l3.58 3.58" fill="none" stroke="#3e7bbf" stroke-width="2.3"/><path d="M38.58 46.6l-3.58 3.58l3.58 3.58" fill="none" stroke="#3e7bbf" stroke-width="2.3"/></svg>
<svg class="j" style="left:1461.03px;top:75.02px" width="120.24" height="26.4" viewBox="119 -900 5400 1100" preserveAspectRatio="none" fill="#444"><text x="119" y="0" textLength="5400" lengthAdjust="spacingAndGlyphs">ピボットグラフ</text></svg>
<svg class="i" style="left:1631px;top:10px;" width="62" height="62" viewBox="0 0 62 62"><rect x=".7" y=".5" width="54.800" height="55.200" fill="#fff" stroke="#8c8c8c"/><rect x="5.500" y="5.100" width="10" height="10.500" fill="#b3b3b3"/><rect x="18.200" y="5.100" width="32.800" height="10.500" fill="#b3b3b3"/><rect x="5.500" y="18.400" width="10" height="32.200" fill="#b3b3b3"/><path d="M18 18.100H51" stroke="#c6c6c6" stroke-width=".8"/><rect x="18" y="22.2" width="32.800" height="3.800" fill="#dcdcdc"/><rect x="18" y="29.35" width="32.800" height="3.800" fill="#dcdcdc"/><rect x="18" y="36.5" width="32.800" height="3.800" fill="#dcdcdc"/><rect x="18" y="43.65" width="32.800" height="3.800" fill="#dcdcdc"/></svg>
<span class="x" style="left:1666.5px;top:32.4px;font-size:44.500px;line-height:40px;font-weight:700;color:#4a7ebb;transform:scaleX(.95);transform-origin:left center">?</span>
<svg class="j" style="left:1618.78px;top:75.02px" width="79.94" height="26.4" viewBox="60 -900 3329 1100" preserveAspectRatio="none" fill="#444"><text x="60" y="0" textLength="3329" lengthAdjust="spacingAndGlyphs">おすすめ</text></svg>
<svg class="j" style="left:1585.61px;top:106.52px" width="144.89" height="26.4" viewBox="119 -900 6273 1100" preserveAspectRatio="none" fill="#444"><text x="119" y="0" textLength="6273" lengthAdjust="spacingAndGlyphs">ピボットテーブル</text></svg>
<svg class="j" style="left:1567.06px;top:143.52px" width="57.88" height="26.4" viewBox="48 -900 2344 1100" preserveAspectRatio="none" fill="#666"><text x="48" y="0" textLength="2344" lengthAdjust="spacingAndGlyphs">ツール</text></svg>
<div style="left:1745px;top:4px;width:62px;height:62px;background:#fbfbfb;border:1px solid #c9c9c9;"></div>
<svg class="i" style="left:1768px;top:20px;" width="17" height="30" viewBox="0 0 17 30"><rect x="1.500" y="1.500" width="13.800" height="26.800" fill="#fff" stroke="#8c8c8c"/><rect x="1" y=".8" width="14.800" height="3.800" fill="#4a7ebb"/><path d="M4.500 8h8.500M4.500 11h8.500M4.500 14h8.500" stroke="#9a9a9a" stroke-width=".9"/><path d="M2 16.800h13M2 22.600h13M8.400 16.800v11.500" stroke="#8c8c8c" stroke-width="1"/><path d="M3.800 19.700h3M10 19.700h3.500M3.800 25.400h3M10 25.400h3.500" stroke="#9a9a9a" stroke-width=".9"/></svg>
<svg class="j" style="left:1753.27px;top:73.52px" width="47.75" height="26.4" viewBox="-2 -900 1973 1100" preserveAspectRatio="none" fill="#444"><text x="-2" y="0" textLength="1973" lengthAdjust="spacingAndGlyphs">表示</text></svg>
<svg class="i" style="left:1772.75px;top:113.1px;" width="9.5" height="5" viewBox="0 0 9.5 5"><path d="M0 0H9.5 L4.75 5 z" fill="#777"/></svg>
<svg class="i" style="left:1974px;top:149px;" width="20" height="14" viewBox="0 0 20 14"><path d="M2 12L10 4L18 12" fill="none" stroke="#666" stroke-width="2.600"/></svg>
</section>
<section class="formulabar" style="left:0px;top:297px;width:2007px;height:94px;">
<div style="left:11px;top:21.5px;width:201.5px;height:52px;background:#fdfdfd;border:1px solid #c9c9c9;"></div>
<span class="x" style="top:33px;height:37px;line-height:37px;font-size:28.7px;left:-1.37px;width:75.1px;text-align:center;color:#444;transform:scaleX(0.96);transform-origin:center center;">A3</span>
<svg class="i" style="left:188.1px;top:42.1px;" width="13.6" height="7.4" viewBox="0 0 13.6 7.4"><path d="M0 0H13.6 L6.8 7.4 z" fill="#777"/></svg>
<div style="left:240.4px;top:36px;width:5.5px;height:4px;background:#bdbdbd;"></div>
<div style="left:240.4px;top:44.7px;width:5.5px;height:4px;background:#bdbdbd;"></div>
<div style="left:240.4px;top:53.4px;width:5.5px;height:4px;background:#bdbdbd;"></div>
<div style="left:273px;top:21.5px;width:218px;height:52px;background:#fdfdfd;border:1px solid #c9c9c9;"></div>
<svg class="i" style="left:298px;top:36px;" width="25" height="24" viewBox="0 0 25 24"><path d="M2 2.500L22.500 21.500M22.500 2.500L2 21.500" stroke="#c3c3c3" stroke-width="2.700"/></svg>
<svg class="i" style="left:369px;top:35px;" width="27" height="25" viewBox="0 0 27 25"><path d="M2 13.500L9.500 21.500L24.500 2.500" fill="none" stroke="#c9c9c9" stroke-width="4.200"/></svg>
<span class="x fx" style="left:441px;top:27.5px;font-size:36px;color:#7d7d7d;-webkit-text-stroke:.55px #7d7d7d;letter-spacing:-.5px">f<span style="font-size:29px">x</span></span>
<div style="left:497px;top:21.5px;width:1498.5px;height:52px;background:#fdfdfd;border:1px solid #c9c9c9;"></div>
<svg class="j" style="left:521.11px;top:31.68px" width="145.79" height="31.35" viewBox="4 -900 4894 1100" preserveAspectRatio="none" fill="#444"><text x="4" y="0" textLength="4894" lengthAdjust="spacingAndGlyphs">合計 / 金額</text></svg>
<svg class="i" style="left:1969px;top:39.5px;" width="20" height="14" viewBox="0 0 20 14"><path d="M2 2.500L10 10.500L18 2.500" fill="none" stroke="#6a6a6a" stroke-width="3.600"/></svg>
</section>
<main class="sheet" style="left:0px;top:391px;width:1403px;height:778px;">
<div style="left:2px;top:0px;width:1365px;height:34px;background:#e6e6e6;"></div>
<svg class="i" style="left:24px;top:4px;" width="28" height="27" viewBox="0 0 28 27"><path d="M27 1V26H1z" fill="#b7b7b7"/></svg>
<div style="left:54.5px;top:0px;width:166px;height:31.5px;background:#d2d2d2;"></div>
<div style="left:55px;top:34px;width:1311.5px;height:743px;background:#fff;"></div>
<div style="left:2px;top:33px;width:1365px;height:1px;background:#ababab;"></div>
<div style="left:54px;top:1px;width:1px;height:33px;background:#b4b4b4;"></div>
<div style="left:220px;top:1px;width:1px;height:33px;background:#b4b4b4;"></div>
<div style="left:385px;top:1px;width:1px;height:33px;background:#b4b4b4;"></div>
<div style="left:550px;top:1px;width:1px;height:33px;background:#b4b4b4;"></div>
<div style="left:715px;top:1px;width:1px;height:33px;background:#b4b4b4;"></div>
<div style="left:880px;top:1px;width:1px;height:33px;background:#b4b4b4;"></div>
<div style="left:1045px;top:1px;width:1px;height:33px;background:#b4b4b4;"></div>
<div style="left:1180.5px;top:1px;width:1px;height:33px;background:#b4b4b4;"></div>
<div style="left:1317px;top:1px;width:1px;height:33px;background:#b4b4b4;"></div>
<span class="x" style="top:1px;height:37px;line-height:37px;font-size:28.3px;left:108.06px;width:58.88px;text-align:center;color:#217346;transform:scaleX(0.93);transform-origin:center center;-webkit-text-stroke:.25px currentColor;">A</span>
<span class="x" style="top:1px;height:37px;line-height:37px;font-size:28.3px;left:273.18px;width:58.88px;text-align:center;color:#111;transform:scaleX(0.93);transform-origin:center center;-webkit-text-stroke:.25px currentColor;">B</span>
<span class="x" style="top:1px;height:37px;line-height:37px;font-size:28.3px;left:437.61px;width:60.44px;text-align:center;color:#111;transform:scaleX(0.93);transform-origin:center center;-webkit-text-stroke:.25px currentColor;">C</span>
<span class="x" style="top:1px;height:37px;line-height:37px;font-size:28.3px;left:602.33px;width:60.44px;text-align:center;color:#111;transform:scaleX(0.93);transform-origin:center center;-webkit-text-stroke:.25px currentColor;">D</span>
<span class="x" style="top:1px;height:37px;line-height:37px;font-size:28.3px;left:768.05px;width:58.88px;text-align:center;color:#111;transform:scaleX(0.93);transform-origin:center center;-webkit-text-stroke:.25px currentColor;">E</span>
<span class="x" style="top:1px;height:37px;line-height:37px;font-size:28.3px;left:933.8px;width:57.29px;text-align:center;color:#111;transform:scaleX(0.93);transform-origin:center center;-webkit-text-stroke:.25px currentColor;">F</span>
<span class="x" style="top:1px;height:37px;line-height:37px;font-size:28.3px;left:1082.56px;width:62.01px;text-align:center;color:#111;transform:scaleX(0.93);transform-origin:center center;-webkit-text-stroke:.25px currentColor;">G</span>
<span class="x" style="top:1px;height:37px;line-height:37px;font-size:28.3px;left:1219.02px;width:60.44px;text-align:center;color:#111;transform:scaleX(0.93);transform-origin:center center;-webkit-text-stroke:.25px currentColor;">H</span>
<div style="left:220px;top:34px;width:1px;height:743px;background:#d6d6d6;"></div>
<div style="left:385px;top:34px;width:1px;height:743px;background:#d6d6d6;"></div>
<div style="left:550px;top:34px;width:1px;height:743px;background:#d6d6d6;"></div>
<div style="left:715px;top:34px;width:1px;height:743px;background:#d6d6d6;"></div>
<div style="left:880px;top:34px;width:1px;height:743px;background:#d6d6d6;"></div>
<div style="left:1045px;top:34px;width:1px;height:743px;background:#d6d6d6;"></div>
<div style="left:1180.5px;top:34px;width:1px;height:743px;background:#d6d6d6;"></div>
<div style="left:1317px;top:34px;width:1px;height:743px;background:#d6d6d6;"></div>
<div style="left:54px;top:34px;width:1px;height:743px;background:#b4b4b4;"></div>
<div style="left:1366px;top:33px;width:1px;height:744px;background:#b0b0b0;"></div>
<span class="x" style="top:35px;height:37px;line-height:37px;font-size:28.3px;left:-0.18px;width:55.74px;text-align:center;color:#111;transform:scaleX(0.95);transform-origin:center center;-webkit-text-stroke:.25px currentColor;">4</span>
<div style="left:55px;top:67px;width:1311.5px;height:1px;background:#d6d6d6;"></div>
<div style="left:2px;top:67px;width:52.5px;height:1px;background:#c4c4c4;"></div>
<span class="x" style="top:69px;height:37px;line-height:37px;font-size:28.3px;left:-0.24px;width:55.74px;text-align:center;color:#111;transform:scaleX(0.95);transform-origin:center center;-webkit-text-stroke:.25px currentColor;">5</span>
<div style="left:55px;top:101px;width:1311.5px;height:1px;background:#d6d6d6;"></div>
<div style="left:2px;top:101px;width:52.5px;height:1px;background:#c4c4c4;"></div>
<span class="x" style="top:103px;height:37px;line-height:37px;font-size:28.3px;left:-0.36px;width:55.74px;text-align:center;color:#111;transform:scaleX(0.95);transform-origin:center center;-webkit-text-stroke:.25px currentColor;">6</span>
<div style="left:55px;top:135px;width:1311.5px;height:1px;background:#d6d6d6;"></div>
<div style="left:2px;top:135px;width:52.5px;height:1px;background:#c4c4c4;"></div>
<span class="x" style="top:137px;height:37px;line-height:37px;font-size:28.3px;left:-0.28px;width:55.74px;text-align:center;color:#111;transform:scaleX(0.95);transform-origin:center center;-webkit-text-stroke:.25px currentColor;">7</span>
<div style="left:55px;top:169px;width:1311.5px;height:1px;background:#d6d6d6;"></div>
<div style="left:2px;top:169px;width:52.5px;height:1px;background:#c4c4c4;"></div>
<span class="x" style="top:171px;height:37px;line-height:37px;font-size:28.3px;left:-0.27px;width:55.74px;text-align:center;color:#111;transform:scaleX(0.95);transform-origin:center center;-webkit-text-stroke:.25px currentColor;">8</span>
<div style="left:55px;top:203px;width:1311.5px;height:1px;background:#d6d6d6;"></div>
<div style="left:2px;top:203px;width:52.5px;height:1px;background:#c4c4c4;"></div>
<span class="x" style="top:205px;height:37px;line-height:37px;font-size:28.3px;left:-0.26px;width:55.74px;text-align:center;color:#111;transform:scaleX(0.95);transform-origin:center center;-webkit-text-stroke:.25px currentColor;">9</span>
<div style="left:55px;top:237px;width:1311.5px;height:1px;background:#d6d6d6;"></div>
<div style="left:2px;top:237px;width:52.5px;height:1px;background:#c4c4c4;"></div>
<span class="x" style="top:239px;height:37px;line-height:37px;font-size:28.3px;left:-8.64px;width:71.48px;text-align:center;color:#111;transform:scaleX(0.95);transform-origin:center center;-webkit-text-stroke:.25px currentColor;">10</span>
<div style="left:55px;top:271px;width:1311.5px;height:1px;background:#d6d6d6;"></div>
<div style="left:2px;top:271px;width:52.5px;height:1px;background:#c4c4c4;"></div>
<span class="x" style="top:273px;height:37px;line-height:37px;font-size:28.3px;left:-8.51px;width:71.48px;text-align:center;color:#111;transform:scaleX(0.95);transform-origin:center center;-webkit-text-stroke:.25px currentColor;">11</span>
<div style="left:55px;top:305px;width:1311.5px;height:1px;background:#d6d6d6;"></div>
<div style="left:2px;top:305px;width:52.5px;height:1px;background:#c4c4c4;"></div>
<span class="x" style="top:307px;height:37px;line-height:37px;font-size:28.3px;left:-8.49px;width:71.48px;text-align:center;color:#111;transform:scaleX(0.95);transform-origin:center center;-webkit-text-stroke:.25px currentColor;">12</span>
<div style="left:55px;top:339px;width:1311.5px;height:1px;background:#d6d6d6;"></div>
<div style="left:2px;top:339px;width:52.5px;height:1px;background:#c4c4c4;"></div>
<span class="x" style="top:341px;height:37px;line-height:37px;font-size:28.3px;left:-8.57px;width:71.48px;text-align:center;color:#111;transform:scaleX(0.95);transform-origin:center center;-webkit-text-stroke:.25px currentColor;">13</span>
<div style="left:55px;top:373px;width:1311.5px;height:1px;background:#d6d6d6;"></div>
<div style="left:2px;top:373px;width:52.5px;height:1px;background:#c4c4c4;"></div>
<span class="x" style="top:375px;height:37px;line-height:37px;font-size:28.3px;left:-8.77px;width:71.48px;text-align:center;color:#111;transform:scaleX(0.95);transform-origin:center center;-webkit-text-stroke:.25px currentColor;">14</span>
<div style="left:55px;top:407px;width:1311.5px;height:1px;background:#d6d6d6;"></div>
<div style="left:2px;top:407px;width:52.5px;height:1px;background:#c4c4c4;"></div>
<span class="x" style="top:409px;height:37px;line-height:37px;font-size:28.3px;left:-8.6px;width:71.48px;text-align:center;color:#111;transform:scaleX(0.95);transform-origin:center center;-webkit-text-stroke:.25px currentColor;">15</span>
<div style="left:55px;top:441px;width:1311.5px;height:1px;background:#d6d6d6;"></div>
<div style="left:2px;top:441px;width:52.5px;height:1px;background:#c4c4c4;"></div>
<span class="x" style="top:443px;height:37px;line-height:37px;font-size:28.3px;left:-8.57px;width:71.48px;text-align:center;color:#111;transform:scaleX(0.95);transform-origin:center center;-webkit-text-stroke:.25px currentColor;">16</span>
<div style="left:55px;top:475px;width:1311.5px;height:1px;background:#d6d6d6;"></div>
<div style="left:2px;top:475px;width:52.5px;height:1px;background:#c4c4c4;"></div>
<span class="x" style="top:477px;height:37px;line-height:37px;font-size:28.3px;left:-8.49px;width:71.48px;text-align:center;color:#111;transform:scaleX(0.95);transform-origin:center center;-webkit-text-stroke:.25px currentColor;">17</span>
<div style="left:55px;top:509px;width:1311.5px;height:1px;background:#d6d6d6;"></div>
<div style="left:2px;top:509px;width:52.5px;height:1px;background:#c4c4c4;"></div>
<span class="x" style="top:511px;height:37px;line-height:37px;font-size:28.3px;left:-8.58px;width:71.48px;text-align:center;color:#111;transform:scaleX(0.95);transform-origin:center center;-webkit-text-stroke:.25px currentColor;">18</span>
<div style="left:55px;top:543px;width:1311.5px;height:1px;background:#d6d6d6;"></div>
<div style="left:2px;top:543px;width:52.5px;height:1px;background:#c4c4c4;"></div>
<span class="x" style="top:545px;height:37px;line-height:37px;font-size:28.3px;left:-8.53px;width:71.48px;text-align:center;color:#111;transform:scaleX(0.95);transform-origin:center center;-webkit-text-stroke:.25px currentColor;">19</span>
<div style="left:55px;top:577px;width:1311.5px;height:1px;background:#d6d6d6;"></div>
<div style="left:2px;top:577px;width:52.5px;height:1px;background:#c4c4c4;"></div>
<span class="x" style="top:579px;height:37px;line-height:37px;font-size:28.3px;left:-8.29px;width:71.48px;text-align:center;color:#111;transform:scaleX(0.95);transform-origin:center center;-webkit-text-stroke:.25px currentColor;">20</span>
<div style="left:55px;top:611px;width:1311.5px;height:1px;background:#d6d6d6;"></div>
<div style="left:2px;top:611px;width:52.5px;height:1px;background:#c4c4c4;"></div>
<span class="x" style="top:613px;height:37px;line-height:37px;font-size:28.3px;left:-8.16px;width:71.48px;text-align:center;color:#111;transform:scaleX(0.95);transform-origin:center center;-webkit-text-stroke:.25px currentColor;">21</span>
<div style="left:55px;top:645px;width:1311.5px;height:1px;background:#d6d6d6;"></div>
<div style="left:2px;top:645px;width:52.5px;height:1px;background:#c4c4c4;"></div>
<span class="x" style="top:647px;height:37px;line-height:37px;font-size:28.3px;left:-8.14px;width:71.48px;text-align:center;color:#111;transform:scaleX(0.95);transform-origin:center center;-webkit-text-stroke:.25px currentColor;">22</span>
<div style="left:55px;top:679px;width:1311.5px;height:1px;background:#d6d6d6;"></div>
<div style="left:2px;top:679px;width:52.5px;height:1px;background:#c4c4c4;"></div>
<span class="x" style="top:681px;height:37px;line-height:37px;font-size:28.3px;left:-8.22px;width:71.48px;text-align:center;color:#111;transform:scaleX(0.95);transform-origin:center center;-webkit-text-stroke:.25px currentColor;">23</span>
<div style="left:55px;top:713px;width:1311.5px;height:1px;background:#d6d6d6;"></div>
<div style="left:2px;top:713px;width:52.5px;height:1px;background:#c4c4c4;"></div>
<span class="x" style="top:715px;height:37px;line-height:37px;font-size:28.3px;left:-8.42px;width:71.48px;text-align:center;color:#111;transform:scaleX(0.95);transform-origin:center center;-webkit-text-stroke:.25px currentColor;">24</span>
<div style="left:55px;top:747px;width:1311.5px;height:1px;background:#d6d6d6;"></div>
<div style="left:2px;top:747px;width:52.5px;height:1px;background:#c4c4c4;"></div>
<span class="x" style="top:749px;height:37px;line-height:37px;font-size:28.3px;left:-8.25px;width:71.48px;text-align:center;color:#111;transform:scaleX(0.95);transform-origin:center center;-webkit-text-stroke:.25px currentColor;">25</span>
<div style="left:52px;top:31px;width:169px;height:4px;background:#217346;"></div>
<svg class="j" style="left:60.14px;top:37.46px" width="85.23" height="32.23" viewBox="13 -900 2961 1100" preserveAspectRatio="none" fill="#000"><text class="g" x="13" y="0" textLength="2961" lengthAdjust="spacingAndGlyphs">担当者</text></svg>
<span class="x" style="top:35px;height:37px;line-height:37px;font-size:28.3px;left:273.36px;width:102.96px;text-align:right;color:#000;transform:scaleX(0.95);transform-origin:right center;-webkit-text-stroke:.25px currentColor;">1001</span>
<span class="x" style="top:35px;height:37px;line-height:37px;font-size:28.3px;left:442.6px;width:102.96px;text-align:right;color:#000;transform:scaleX(0.95);transform-origin:right center;-webkit-text-stroke:.25px currentColor;">1002</span>
<span class="x" style="top:35px;height:37px;line-height:37px;font-size:28.3px;left:607.43px;width:102.96px;text-align:right;color:#000;transform:scaleX(0.95);transform-origin:right center;-webkit-text-stroke:.25px currentColor;">1003</span>
<span class="x" style="top:35px;height:37px;line-height:37px;font-size:28.3px;left:768.36px;width:102.96px;text-align:right;color:#000;transform:scaleX(0.95);transform-origin:right center;-webkit-text-stroke:.25px currentColor;">2001</span>
<span class="x" style="top:35px;height:37px;line-height:37px;font-size:28.3px;left:933.36px;width:102.96px;text-align:right;color:#000;transform:scaleX(0.95);transform-origin:right center;-webkit-text-stroke:.25px currentColor;">3001</span>
<svg class="j" style="left:1051.14px;top:37.46px" width="56.01" height="32.23" viewBox="15 -900 1962 1100" preserveAspectRatio="none" fill="#000"><text class="g" x="15" y="0" textLength="1962" lengthAdjust="spacingAndGlyphs">総計</text></svg>
<svg class="j" style="left:60.62px;top:71.46px" width="84.26" height="32.23" viewBox="38 -900 2869 1100" preserveAspectRatio="none" fill="#000"><text class="g" x="38" y="0" textLength="2869" lengthAdjust="spacingAndGlyphs">小田中</text></svg>
<span class="x" style="top:69px;height:37px;line-height:37px;font-size:28.3px;left:245.82px;width:134.43px;text-align:right;color:#000;transform:scaleX(0.95);transform-origin:right center;-webkit-text-stroke:.25px currentColor;">551300</span>
<span class="x" style="top:69px;height:37px;line-height:37px;font-size:28.3px;left:410.82px;width:134.43px;text-align:right;color:#000;transform:scaleX(0.95);transform-origin:right center;-webkit-text-stroke:.25px currentColor;">321820</span>
<span class="x" style="top:69px;height:37px;line-height:37px;font-size:28.3px;left:575.82px;width:134.43px;text-align:right;color:#000;transform:scaleX(0.95);transform-origin:right center;-webkit-text-stroke:.25px currentColor;">467680</span>
<span class="x" style="top:69px;height:37px;line-height:37px;font-size:28.3px;left:740.82px;width:134.43px;text-align:right;color:#000;transform:scaleX(0.95);transform-origin:right center;-webkit-text-stroke:.25px currentColor;">649360</span>
<span class="x" style="top:69px;height:37px;line-height:37px;font-size:28.3px;left:905.82px;width:134.43px;text-align:right;color:#000;transform:scaleX(0.95);transform-origin:right center;-webkit-text-stroke:.25px currentColor;">858060</span>
<span class="x" style="top:69px;height:37px;line-height:37px;font-size:28.3px;left:1026.58px;width:150.17px;text-align:right;color:#000;transform:scaleX(0.95);transform-origin:right center;-webkit-text-stroke:.25px currentColor;">2848220</span>
<svg class="j" style="left:60.15px;top:105.46px" width="55.71" height="32.23" viewBox="9 -900 1956 1100" preserveAspectRatio="none" fill="#000"><text class="g" x="9" y="0" textLength="1956" lengthAdjust="spacingAndGlyphs">船井</text></svg>
<span class="x" style="top:103px;height:37px;line-height:37px;font-size:28.3px;left:245.82px;width:134.43px;text-align:right;color:#000;transform:scaleX(0.95);transform-origin:right center;-webkit-text-stroke:.25px currentColor;">714260</span>
<span class="x" style="top:103px;height:37px;line-height:37px;font-size:28.3px;left:410.82px;width:134.43px;text-align:right;color:#000;transform:scaleX(0.95);transform-origin:right center;-webkit-text-stroke:.25px currentColor;">255040</span>
<span class="x" style="top:103px;height:37px;line-height:37px;font-size:28.3px;left:575.82px;width:134.43px;text-align:right;color:#000;transform:scaleX(0.95);transform-origin:right center;-webkit-text-stroke:.25px currentColor;">494380</span>
<span class="x" style="top:103px;height:37px;line-height:37px;font-size:28.3px;left:740.82px;width:134.43px;text-align:right;color:#000;transform:scaleX(0.95);transform-origin:right center;-webkit-text-stroke:.25px currentColor;">485620</span>
<span class="x" style="top:103px;height:37px;line-height:37px;font-size:28.3px;left:905.82px;width:134.43px;text-align:right;color:#000;transform:scaleX(0.95);transform-origin:right center;-webkit-text-stroke:.25px currentColor;">787900</span>
<span class="x" style="top:103px;height:37px;line-height:37px;font-size:28.3px;left:1026.58px;width:150.17px;text-align:right;color:#000;transform:scaleX(0.95);transform-origin:right center;-webkit-text-stroke:.25px currentColor;">2737200</span>
<svg class="j" style="left:60.12px;top:139.46px" width="54.77" height="32.23" viewBox="31 -900 1857 1100" preserveAspectRatio="none" fill="#000"><text class="g" x="31" y="0" textLength="1857" lengthAdjust="spacingAndGlyphs">津川</text></svg>
<span class="x" style="top:137px;height:37px;line-height:37px;font-size:28.3px;left:245.82px;width:134.43px;text-align:right;color:#000;transform:scaleX(0.95);transform-origin:right center;-webkit-text-stroke:.25px currentColor;">643440</span>
<span class="x" style="top:137px;height:37px;line-height:37px;font-size:28.3px;left:410.82px;width:134.43px;text-align:right;color:#000;transform:scaleX(0.95);transform-origin:right center;-webkit-text-stroke:.25px currentColor;">703000</span>
<span class="x" style="top:137px;height:37px;line-height:37px;font-size:28.3px;left:575.82px;width:134.43px;text-align:right;color:#000;transform:scaleX(0.95);transform-origin:right center;-webkit-text-stroke:.25px currentColor;">599300</span>
<span class="x" style="top:137px;height:37px;line-height:37px;font-size:28.3px;left:740.82px;width:134.43px;text-align:right;color:#000;transform:scaleX(0.95);transform-origin:right center;-webkit-text-stroke:.25px currentColor;">277700</span>
<span class="x" style="top:137px;height:37px;line-height:37px;font-size:28.3px;left:905.82px;width:134.43px;text-align:right;color:#000;transform:scaleX(0.95);transform-origin:right center;-webkit-text-stroke:.25px currentColor;">956680</span>
<span class="x" style="top:137px;height:37px;line-height:37px;font-size:28.3px;left:1026.58px;width:150.17px;text-align:right;color:#000;transform:scaleX(0.95);transform-origin:right center;-webkit-text-stroke:.25px currentColor;">3180120</span>
<svg class="j" style="left:60.65px;top:173.46px" width="55.2" height="32.23" viewBox="28 -900 1952 1100" preserveAspectRatio="none" fill="#000"><text class="g" x="28" y="0" textLength="1952" lengthAdjust="spacingAndGlyphs">木島</text></svg>
<span class="x" style="top:171px;height:37px;line-height:37px;font-size:28.3px;left:245.82px;width:134.43px;text-align:right;color:#000;transform:scaleX(0.95);transform-origin:right center;-webkit-text-stroke:.25px currentColor;">447820</span>
<span class="x" style="top:171px;height:37px;line-height:37px;font-size:28.3px;left:410.82px;width:134.43px;text-align:right;color:#000;transform:scaleX(0.95);transform-origin:right center;-webkit-text-stroke:.25px currentColor;">810560</span>
<span class="x" style="top:171px;height:37px;line-height:37px;font-size:28.3px;left:575.82px;width:134.43px;text-align:right;color:#000;transform:scaleX(0.95);transform-origin:right center;-webkit-text-stroke:.25px currentColor;">566620</span>
<span class="x" style="top:171px;height:37px;line-height:37px;font-size:28.3px;left:740.82px;width:134.43px;text-align:right;color:#000;transform:scaleX(0.95);transform-origin:right center;-webkit-text-stroke:.25px currentColor;">634660</span>
<span class="x" style="top:171px;height:37px;line-height:37px;font-size:28.3px;left:905.82px;width:134.43px;text-align:right;color:#000;transform:scaleX(0.95);transform-origin:right center;-webkit-text-stroke:.25px currentColor;">591780</span>
<span class="x" style="top:171px;height:37px;line-height:37px;font-size:28.3px;left:1026.58px;width:150.17px;text-align:right;color:#000;transform:scaleX(0.95);transform-origin:right center;-webkit-text-stroke:.25px currentColor;">3051440</span>
<svg class="j" style="left:60.66px;top:207.46px" width="55.19" height="32.23" viewBox="15 -900 1962 1100" preserveAspectRatio="none" fill="#000"><text class="g" x="15" y="0" textLength="1962" lengthAdjust="spacingAndGlyphs">総計</text></svg>
<span class="x" style="top:205px;height:37px;line-height:37px;font-size:28.3px;left:230.08px;width:150.17px;text-align:right;color:#000;transform:scaleX(0.95);transform-origin:right center;-webkit-text-stroke:.25px currentColor;">2356820</span>
<span class="x" style="top:205px;height:37px;line-height:37px;font-size:28.3px;left:395.08px;width:150.17px;text-align:right;color:#000;transform:scaleX(0.95);transform-origin:right center;-webkit-text-stroke:.25px currentColor;">2090420</span>
<span class="x" style="top:205px;height:37px;line-height:37px;font-size:28.3px;left:560.08px;width:150.17px;text-align:right;color:#000;transform:scaleX(0.95);transform-origin:right center;-webkit-text-stroke:.25px currentColor;">2127980</span>
<span class="x" style="top:205px;height:37px;line-height:37px;font-size:28.3px;left:725.08px;width:150.17px;text-align:right;color:#000;transform:scaleX(0.95);transform-origin:right center;-webkit-text-stroke:.25px currentColor;">2047340</span>
<span class="x" style="top:205px;height:37px;line-height:37px;font-size:28.3px;left:890.08px;width:150.17px;text-align:right;color:#000;transform:scaleX(0.95);transform-origin:right center;-webkit-text-stroke:.25px currentColor;">3194420</span>
<span class="x" style="top:205px;height:37px;line-height:37px;font-size:28.3px;left:1010.84px;width:165.91px;text-align:right;color:#000;transform:scaleX(0.95);transform-origin:right center;-webkit-text-stroke:.25px currentColor;">11816980</span>
<div style="left:186px;top:36px;width:34px;height:31px;background:#fff;border:1px solid;border-color:#d4d4d4 #a0a0a0 #a0a0a0 #d4d4d4;"></div>
<svg class="i" style="left:195.6px;top:47.2px;" width="13.2" height="7" viewBox="0 0 13.2 7"><path d="M0 0H13.2 L6.6 7 z" fill="#777"/></svg>
<div style="left:55px;top:202.5px;width:1126px;height:1.2px;background:#7f7f7f;"></div>
<div style="left:219.4px;top:36.5px;width:1.9px;height:201px;background:#1414d4;"></div>
<div style="left:1180.1px;top:34px;width:1.9px;height:203.5px;background:#1414d4;"></div>
<div style="left:219.4px;top:65.8px;width:962.5px;height:1.8px;background:#1414d4;"></div>
<div style="left:55px;top:235.8px;width:1127px;height:1.8px;background:#1414d4;"></div>
<div style="left:217px;top:34px;width:7px;height:3px;background:#217346;"></div>
<div style="left:1369.5px;top:1.3px;width:32px;height:32.2px;background:#fff;border:1px solid #c9c9c9;"></div>
<svg class="i" style="left:1376px;top:12.5px;" width="18" height="10" viewBox="0 0 18 10"><path d="M0 10L9 0L18 10z" fill="#777"/></svg>
<div style="left:1369.5px;top:33.5px;width:32px;height:90.5px;background:#dadada;"></div>
<div style="left:1369.5px;top:123px;width:32px;height:623px;background:#fff;border:1px solid #c9c9c9;"></div>
<div style="left:1369.5px;top:746.5px;width:32px;height:32px;background:#fff;border:1px solid #c9c9c9;"></div>
<svg class="i" style="left:1377.5px;top:759.3px;" width="15.5" height="8" viewBox="0 0 15.500 8"><path d="M0 0H15.500L7.750 8z" fill="#777"/></svg>
</main>
<nav class="sheetbar" style="left:0px;top:1168px;width:1403px;height:42px;">
<div style="left:1px;top:0px;width:139px;height:1px;background:#a3a3a3;"></div>
<div style="left:264px;top:0px;width:1103px;height:1px;background:#a3a3a3;"></div>
<svg class="i" style="left:33.4px;top:12.7px;" width="10" height="15.5" viewBox="0 0 10 15.500"><path d="M10 0V15.500L0 7.750z" fill="#c8c8c8"/></svg>
<svg class="i" style="left:74.3px;top:12.7px;" width="10" height="15.5" viewBox="0 0 10 15.500"><path d="M0 0V15.500L10 7.750z" fill="#c8c8c8"/></svg>
<div style="left:140px;top:0px;width:124px;height:36px;background:#fff;border-left:1px solid #a6a6a6;border-right:1px solid #a6a6a6;"></div>
<div style="left:140px;top:36px;width:124px;height:2px;background:#217346;"></div>
<span class="x" style="top:0px;height:38px;line-height:38px;font-size:29px;left:135.07px;width:131.91px;text-align:center;color:#217346;transform:scaleX(1.02);transform-origin:center center;">Sheet3</span>
<svg class="j" style="left:274.69px;top:4.22px" width="108.12" height="29.15" viewBox="-3 -900 4000 1100" preserveAspectRatio="none" fill="#444"><text x="-3" y="0" textLength="4000" lengthAdjust="spacingAndGlyphs">集計処理</text></svg>
<span class="x" style="top:0px;height:38px;line-height:38px;font-size:29px;left:389.92px;width:131.91px;text-align:center;color:#444;transform:scaleX(1.02);transform-origin:center center;">Sheet2</span>
<span class="x" style="top:0px;height:38px;line-height:38px;font-size:29px;left:512.59px;width:131.91px;text-align:center;color:#444;transform:scaleX(1);transform-origin:center center;">Sheet1</span>
<div style="left:395.2px;top:4px;width:1.2px;height:33px;background:#b9b9b9;"></div>
<div style="left:517.9px;top:4px;width:1.2px;height:33px;background:#b9b9b9;"></div>
<div style="left:639.9px;top:4px;width:1.2px;height:33px;background:#b9b9b9;"></div>
<svg class="i" style="left:686px;top:5px;" width="34" height="34" viewBox="0 0 34 34"><circle cx="17" cy="17" r="15.200" fill="none" stroke="#777" stroke-width="2"/><path d="M9.500 17h15M17 9.500v15" stroke="#777" stroke-width="3"/></svg>
<div style="left:837.8px;top:11px;width:4.3px;height:3.6px;background:#b4b4b4;"></div>
<div style="left:837.8px;top:19.3px;width:4.3px;height:3.6px;background:#b4b4b4;"></div>
<div style="left:837.8px;top:27.6px;width:4.3px;height:3.6px;background:#b4b4b4;"></div>
<div style="left:862.5px;top:4.5px;width:32.5px;height:32.2px;background:#fff;border:1px solid #c9c9c9;"></div>
<svg class="i" style="left:874px;top:14.5px;" width="8.5" height="13" viewBox="0 0 8.500 13"><path d="M8.500 0V13L0 6.500z" fill="#666"/></svg>
<div style="left:894.5px;top:4.5px;width:385.3px;height:32.2px;background:#fff;border:1px solid #c9c9c9;"></div>
<div style="left:1279.8px;top:4.5px;width:55.4px;height:32.2px;background:#dadada;"></div>
<div style="left:1335px;top:4.5px;width:32.5px;height:32.2px;background:#fff;border:1px solid #c9c9c9;"></div>
<svg class="i" style="left:1346.7px;top:14.5px;" width="8.5" height="13" viewBox="0 0 8.500 13"><path d="M0 0V13L8.500 6.500z" fill="#666"/></svg>
</nav>
<footer class="statusbar" style="left:0px;top:1209px;width:2007px;height:45px;">
<div style="left:0px;top:0px;width:2007px;height:1.2px;background:#cfcfcf;"></div>
<svg class="j" style="left:8.27px;top:9.38px" width="95.77" height="25.85" viewBox="10 -900 3909 1100" preserveAspectRatio="none" fill="#444"><text x="10" y="0" textLength="3909" lengthAdjust="spacingAndGlyphs">準備完了</text></svg>
<div style="left:1485.3px;top:1px;width:51.5px;height:42.5px;background:#c8c8c8;"></div>
<svg class="i" style="left:1498px;top:9.3px;" width="26" height="24.5" viewBox="0 0 26 24.500"><path d="M.6 .6H25.200V23.800H.6zM.6 8.300H25.200M.6 16H25.200M8.800 .6V23.800M17 .6V23.800" fill="none" stroke="#666" stroke-width="1.200"/></svg>
<svg class="i" style="left:1550px;top:10.2px;" width="27" height="24.5" viewBox="0 0 27 24.500"><rect x=".6" y=".6" width="25" height="23" fill="#fdfdfd" stroke="#666" stroke-width="1.200"/><path d="M7.300 6.200H19M7.300 10H19M7.300 13.800H19M7.300 17.600H19" stroke="#666" stroke-width="1.200"/></svg>
<svg class="i" style="left:1601.7px;top:10.2px;" width="27" height="24.5" viewBox="0 0 27 24.500"><path d="M.6 .6H25.200V23.200H.6zM.6 13.500H15.800V.6M8.200 .6V13.500" fill="none" stroke="#666" stroke-width="1.200"/></svg>
<div style="left:1649.8px;top:20.4px;width:12.2px;height:3.2px;background:#555;"></div>
<div style="left:1671.3px;top:21.2px;width:197.5px;height:1.1px;background:#8c8c8c;"></div>
<div style="left:1766px;top:11px;width:8.2px;height:21.6px;background:#666;"></div>
<svg class="i" style="left:1876.5px;top:14.2px;" width="15.6" height="15.6" viewBox="0 0 15.600 15.600"><path d="M0 7.800H15.600M7.800 0V15.600" stroke="#555" stroke-width="3"/></svg>
<span class="x" style="top:7px;height:32px;line-height:32px;font-size:24.3px;left:1889.83px;width:102.15px;text-align:center;color:#444;transform:scaleX(1.12);transform-origin:center center;">100%</span>
</footer>
<aside class="pane" style="left:1403px;top:391px;width:604px;height:818px;">
<div style="left:1.6px;top:0px;width:1.2px;height:818px;background:#c6c6c6;"></div>
<svg class="j" style="left:23.01px;top:19.2px" width="377.39" height="44" viewBox="119 -900 9489 1100" preserveAspectRatio="none" fill="#217346"><text x="119" y="0" textLength="9489" lengthAdjust="spacingAndGlyphs">ピボットテーブルのフィー</text></svg>
<div style="left:408.5px;top:53.3px;width:5.2px;height:5px;background:#217346;"></div>
<div style="left:422.8px;top:53.3px;width:5.2px;height:5px;background:#217346;"></div>
<div style="left:437.2px;top:53.3px;width:5.2px;height:5px;background:#217346;"></div>
<svg class="i" style="left:474.3px;top:35.7px;" width="14.2" height="7.6" viewBox="0 0 14.2 7.6"><path d="M0 0H14.2 L7.1 7.6 z" fill="#777"/></svg>
<svg class="i" style="left:554.6px;top:31.7px;" width="16.5" height="16.2" viewBox="0 0 16.500 16.200"><path d="M1.500 1.500L15 14.700M15 1.500L1.500 14.700" stroke="#555" stroke-width="3"/></svg>
<svg class="j" style="left:24.13px;top:88.08px" width="445.34" height="25.85" viewBox="148 -900 19887 1100" preserveAspectRatio="none" fill="#444"><text x="148" y="0" textLength="19887" lengthAdjust="spacingAndGlyphs">レポートに追加するフィールドを選択してください:</text></svg>
<div style="left:517px;top:78px;width:72px;height:42.5px;background:#fdfdfd;border:1px solid #c3c3c3;"></div>
<svg class="i" style="left:528px;top:85.3px;" width="27.4" height="27.4" viewBox="0 0 27.400 27.400"><g transform="translate(13.700 13.700)" fill="#8c8c8c"><rect x="-2.900" y="-13.300" width="5.800" height="6" transform="rotate(0)"/><rect x="-2.900" y="-13.300" width="5.800" height="6" transform="rotate(45)"/><rect x="-2.900" y="-13.300" width="5.800" height="6" transform="rotate(90)"/><rect x="-2.900" y="-13.300" width="5.800" height="6" transform="rotate(135)"/><rect x="-2.900" y="-13.300" width="5.800" height="6" transform="rotate(180)"/><rect x="-2.900" y="-13.300" width="5.800" height="6" transform="rotate(225)"/><rect x="-2.900" y="-13.300" width="5.800" height="6" transform="rotate(270)"/><rect x="-2.900" y="-13.300" width="5.800" height="6" transform="rotate(315)"/><path fill-rule="evenodd" d="M0 -10A10 10 0 1 0 0 10A10 10 0 1 0 0 -10zM0 -4.600A4.600 4.600 0 1 1 0 4.600A4.600 4.600 0 1 1 0 -4.600z"/></g></svg>
<svg class="i" style="left:567px;top:94.7px;" width="15.2" height="8.2" viewBox="0 0 15.2 8.2"><path d="M0 0H15.2 L7.6 8.2 z" fill="#666"/></svg>
<div style="left:23px;top:139px;width:566px;height:36px;background:#fff;border:1px solid #b5b5b5;"></div>
<svg class="j" style="left:24.97px;top:143.58px" width="47.75" height="25.85" viewBox="0 -900 1971 1100" preserveAspectRatio="none" fill="#777"><text x="0" y="0" textLength="1971" lengthAdjust="spacingAndGlyphs">検索</text></svg>
<svg class="i" style="left:557px;top:142px;" width="30" height="30" viewBox="0 0 30 30"><circle cx="18.600" cy="10.800" r="8.400" fill="none" stroke="#4a7ebb" stroke-width="2.400"/><path d="M12.500 17L2 27.300" stroke="#4a7ebb" stroke-width="3.600"/></svg>
<div class="fieldlist" style="left:23.3px;top:201.1px;width:565.6px;height:212.6px;background:#fdfdfd;overflow:hidden;">
<div style="left:1.8px;top:0.9px;width:25.8px;height:25.8px;background:#fff;border:1px solid #ababab;"></div>
<svg class="j" style="left:34.95px;top:2.98px" width="46" height="25.85" viewBox="146 -900 1838 1100" preserveAspectRatio="none" fill="#444"><text x="146" y="0" textLength="1838" lengthAdjust="spacingAndGlyphs">日付</text></svg>
<div style="left:1.8px;top:38.95px;width:25.8px;height:25.8px;background:#fff;border:1px solid #ababab;"></div>
<svg class="i" style="left:1.8px;top:38.95px;" width="26" height="26" viewBox="0 0 26 26"><path d="M4.200 13.300L11.300 20.500L22.700 5.500" fill="none" stroke="#686868" stroke-width="3.100"/></svg>
<svg class="j" style="left:33.48px;top:41.03px" width="95.95" height="25.85" viewBox="-1 -900 3981 1100" preserveAspectRatio="none" fill="#333" stroke="#333" stroke-width="30"><text x="-1" y="0" textLength="3981" lengthAdjust="spacingAndGlyphs">顧客番号</text></svg>
<div style="left:1.8px;top:77px;width:25.8px;height:25.8px;background:#fff;border:1px solid #ababab;"></div>
<svg class="i" style="left:1.8px;top:77px;" width="26" height="26" viewBox="0 0 26 26"><path d="M4.200 13.300L11.300 20.500L22.700 5.500" fill="none" stroke="#686868" stroke-width="3.100"/></svg>
<svg class="j" style="left:34.39px;top:79.08px" width="70.73" height="25.85" viewBox="4 -900 2972 1100" preserveAspectRatio="none" fill="#333" stroke="#333" stroke-width="30"><text x="4" y="0" textLength="2972" lengthAdjust="spacingAndGlyphs">担当者</text></svg>
<div style="left:1.8px;top:115.05px;width:25.8px;height:25.8px;background:#fff;border:1px solid #ababab;"></div>
<svg class="j" style="left:34.37px;top:117.13px" width="47.46" height="25.85" viewBox="53 -900 1945 1100" preserveAspectRatio="none" fill="#444"><text x="53" y="0" textLength="1945" lengthAdjust="spacingAndGlyphs">品番</text></svg>
<div style="left:1.8px;top:153.1px;width:25.8px;height:25.8px;background:#fff;border:1px solid #ababab;"></div>
<svg class="j" style="left:34.35px;top:155.18px" width="46.6" height="25.85" viewBox="53 -900 1865 1100" preserveAspectRatio="none" fill="#444"><text x="53" y="0" textLength="1865" lengthAdjust="spacingAndGlyphs">品名</text></svg>
<div style="left:1.8px;top:191.15px;width:25.8px;height:25.8px;background:#fff;border:1px solid #ababab;"></div>
<svg class="j" style="left:34.37px;top:193.23px" width="47.45" height="25.85" viewBox="24 -900 1957 1100" preserveAspectRatio="none" fill="#444"><text x="24" y="0" textLength="1957" lengthAdjust="spacingAndGlyphs">単価</text></svg>
<div style="left:531.7px;top:121.9px;width:33px;height:58px;background:#f0f0f0;"></div>
<div style="left:531.7px;top:0.9px;width:33px;height:32.6px;background:#fff;border:1px solid #c9c9c9;"></div>
<svg class="i" style="left:538.7px;top:13.5px;" width="18" height="8.4" viewBox="0 0 18 8.400"><path d="M0 8.400L9 0L18 8.400z" fill="#777"/></svg>
<div style="left:531.7px;top:34.1px;width:33px;height:88.5px;background:#fff;border:1px solid #c9c9c9;"></div>
<div style="left:531.7px;top:179.2px;width:33px;height:32.6px;background:#fff;border:1px solid #c9c9c9;"></div>
<svg class="i" style="left:540.2px;top:192.1px;" width="15.6" height="7.6" viewBox="0 0 15.600 7.600"><path d="M0 0H15.600L7.800 7.600z" fill="#777"/></svg>
</div>
<div style="left:24.8px;top:429.5px;width:568px;height:0px;border-top:1.300px dotted #bdbdbd;"></div>
<svg class="j" style="left:27.55px;top:438.38px" width="439.8" height="25.85" viewBox="8 -900 20367 1100" preserveAspectRatio="none" fill="#444"><text x="8" y="0" textLength="20367" lengthAdjust="spacingAndGlyphs">次のボックス間でフィールドをドラッグしてください:</text></svg>
<svg class="i" style="left:32.7px;top:492.3px;" width="22" height="22" viewBox="0 0 22 22"><path d="M0 0H22L13.300 9.500V22H8.700V9.500z" fill="#8f8f8f"/></svg>
<svg class="j" style="left:64.32px;top:491.78px" width="86.95" height="25.85" viewBox="86 -900 3862 1100" preserveAspectRatio="none" fill="#444"><text x="86" y="0" textLength="3862" lengthAdjust="spacingAndGlyphs">フィルター</text></svg>
<div style="left:26.3px;top:527px;width:274.7px;height:76.6px;background:#fdfdfd;"></div>
<svg class="i" style="left:319px;top:493.8px;" width="18.5" height="19.6" viewBox="0 0 18.500 19.600"><rect width="5.600" height="19.600" fill="#8f8f8f"/><path d="M8.600 0v19.600M12 0v19.600M15.400 0v19.600" stroke="#a5a5a5" stroke-width="1.200"/></svg>
<svg class="j" style="left:348.54px;top:491.78px" width="24.23" height="25.85" viewBox="-8 -900 952 1100" preserveAspectRatio="none" fill="#444"><text x="-8" y="0" textLength="952" lengthAdjust="spacingAndGlyphs">列</text></svg>
<div style="left:310px;top:527px;width:279.8px;height:76.6px;background:#fdfdfd;"></div>
<div style="left:311.5px;top:529.2px;width:277.4px;height:45.4px;background:#fdfdfd;border:1px solid #ababab;"></div>
<svg class="j" style="left:328.07px;top:540.48px" width="96.66" height="25.85" viewBox="-1 -900 3981 1100" preserveAspectRatio="none" fill="#444"><text x="-1" y="0" textLength="3981" lengthAdjust="spacingAndGlyphs">顧客番号</text></svg>
<svg class="i" style="left:550.5px;top:547.7px;" width="15.6" height="8.6" viewBox="0 0 15.6 8.6"><path d="M0 0H15.6 L7.8 8.6 z" fill="#666"/></svg>
<div style="left:307.1px;top:487px;width:1.2px;height:246.6px;background:#c8c8c8;"></div>
<div style="left:26.3px;top:609.7px;width:563.5px;height:1.2px;background:#c8c8c8;"></div>
<svg class="i" style="left:33.3px;top:623.2px;" width="20.6" height="18.4" viewBox="0 0 20.600 18.400"><rect width="20.600" height="5.400" fill="#8f8f8f"/><path d="M0 8.800h20.600M0 12.400h20.600M0 16h20.600" stroke="#a5a5a5" stroke-width="1.200"/></svg>
<svg class="j" style="left:64.27px;top:621.58px" width="24.16" height="25.85" viewBox="-5 -900 990 1100" preserveAspectRatio="none" fill="#444"><text x="-5" y="0" textLength="990" lengthAdjust="spacingAndGlyphs">行</text></svg>
<div style="left:26.3px;top:657.1px;width:274.7px;height:76.6px;background:#fdfdfd;"></div>
<div style="left:27.2px;top:659.2px;width:272.2px;height:45.4px;background:#fdfdfd;border:1px solid #ababab;"></div>
<svg class="j" style="left:44.68px;top:670.48px" width="71.65" height="25.85" viewBox="4 -900 2972 1100" preserveAspectRatio="none" fill="#444"><text x="4" y="0" textLength="2972" lengthAdjust="spacingAndGlyphs">担当者</text></svg>
<svg class="i" style="left:261px;top:677.7px;" width="15.6" height="8.6" viewBox="0 0 15.6 8.6"><path d="M0 0H15.6 L7.8 8.6 z" fill="#666"/></svg>
<span class="x" style="top:616px;height:34px;line-height:34px;font-size:26px;left:299.45px;width:56.07px;text-align:center;color:#8f8f8f;transform:scaleX(1.26);transform-origin:center center;">Σ</span>
<svg class="j" style="left:348.56px;top:621.58px" width="24.78" height="25.85" viewBox="-14 -900 1004 1100" preserveAspectRatio="none" fill="#444"><text x="-14" y="0" textLength="1004" lengthAdjust="spacingAndGlyphs">値</text></svg>
<div style="left:310px;top:657.1px;width:279.8px;height:76.6px;background:#fdfdfd;"></div>
<div style="left:311.5px;top:659.2px;width:277.4px;height:45.4px;background:#fdfdfd;border:1px solid #ababab;"></div>
<svg class="j" style="left:328.04px;top:670.48px" width="124.32" height="25.85" viewBox="4 -900 4894 1100" preserveAspectRatio="none" fill="#444"><text x="4" y="0" textLength="4894" lengthAdjust="spacingAndGlyphs">合計 / 金額</text></svg>
<svg class="i" style="left:550.5px;top:677.7px;" width="15.6" height="8.6" viewBox="0 0 15.6 8.6"><path d="M0 0H15.6 L7.8 8.6 z" fill="#666"/></svg>
<div style="left:26.2px;top:770.3px;width:25.8px;height:25.8px;background:#fff;border:1px solid #ababab;"></div>
<svg class="j" style="left:62.3px;top:771.78px" width="261.1" height="25.85" viewBox="148 -900 11198 1100" preserveAspectRatio="none" fill="#444"><text x="148" y="0" textLength="11198" lengthAdjust="spacingAndGlyphs">レイアウトの更新を保留する</text></svg>
<div style="left:521px;top:759px;width:68px;height:47.7px;background:#fdfdfd;"></div>
<svg class="j" style="left:530.97px;top:771.48px" width="48.06" height="25.85" viewBox="17 -900 1973 1100" preserveAspectRatio="none" fill="#b3b3b3"><text x="17" y="0" textLength="1973" lengthAdjust="spacingAndGlyphs">更新</text></svg>
</aside>
<div style="left:0;top:0;width:1px;height:1254px;background:#217346"></div><div style="left:2006px;top:0;width:1px;height:1254px;background:#217346"></div><div style="left:0;top:1253px;width:2007px;height:1px;background:#217346"></div>
</div>
</body>
</html>
